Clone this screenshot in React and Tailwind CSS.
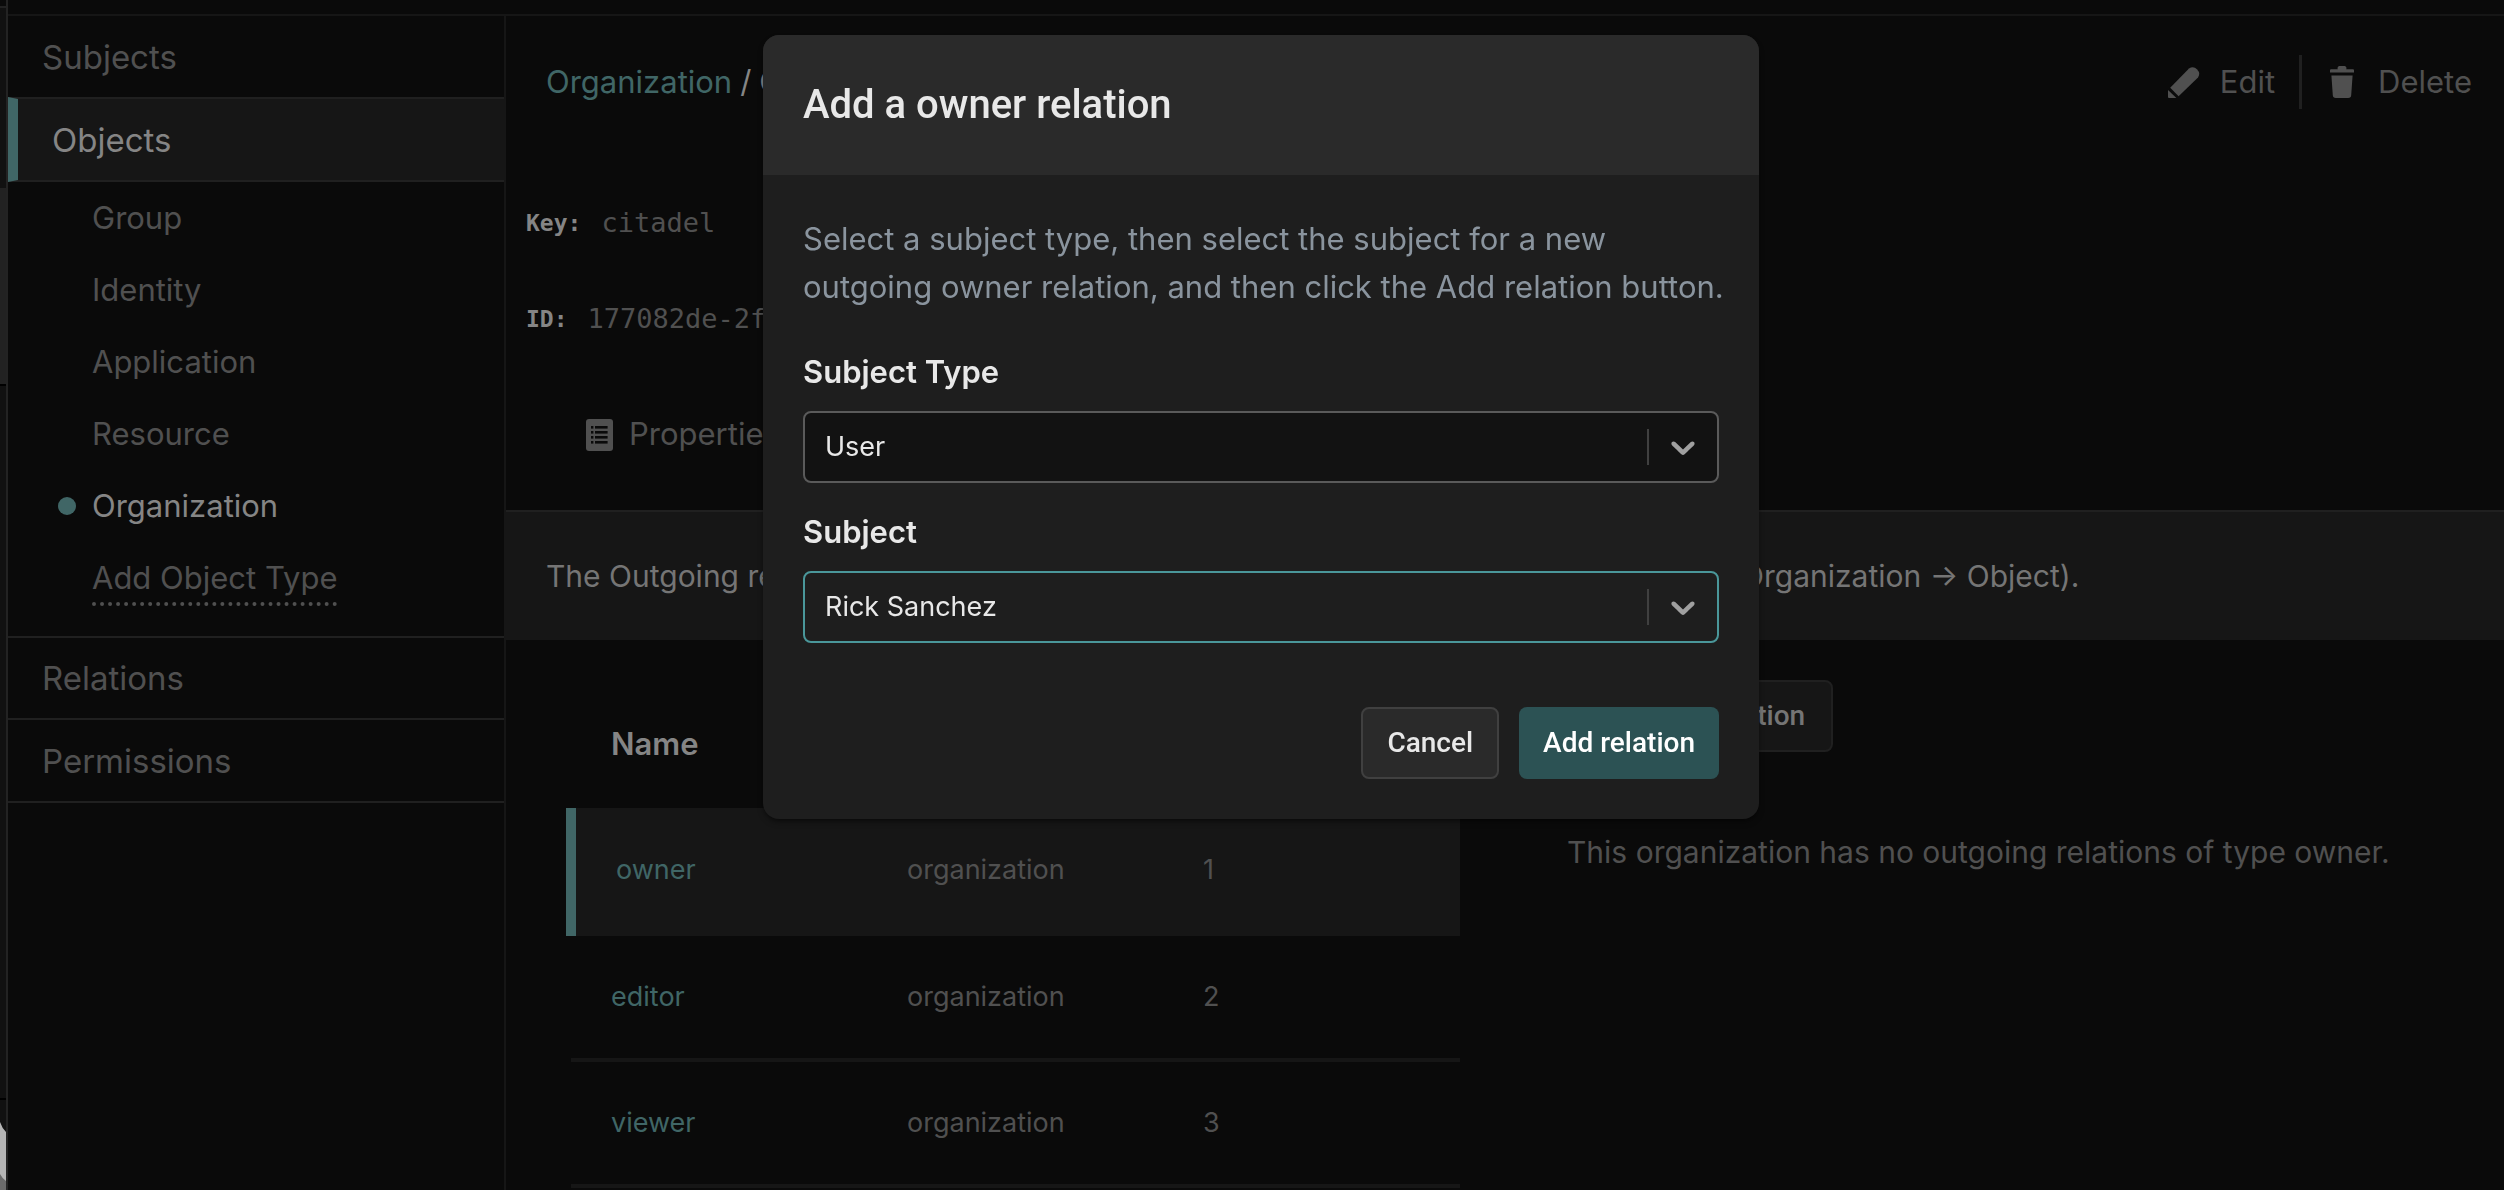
const OBJECT_TYPES = ["Group", "Identity", "Application", "Resource", "Organization"];

const RELATIONS = [
  { name: "owner", type: "organization", count: 1, active: true },
  { name: "editor", type: "organization", count: 2 },
  { name: "viewer", type: "organization", count: 3 },
];

function PencilIcon() {
  return (
    <svg viewBox="0 0 32 32" className="size-8" fill="currentColor" aria-hidden="true">
      <path d="M2.2 21.8 21 2.4a6.6 6.6 0 0 1 9 9.2L10.6 30.2Z" />
      <path d="M0 24 8.4 32H1a1 1 0 0 1-1-1Z" />
    </svg>
  );
}

function TrashIcon() {
  return (
    <svg viewBox="0 0 24 32" className="h-8 w-6" fill="currentColor" aria-hidden="true">
      <path d="M10 0h4a2.2 2.2 0 0 1 2.2 3.2H23a1 1 0 0 1 1 1v2.2H0V4.2a1 1 0 0 1 1-1h6.8A2.2 2.2 0 0 1 10 0Z" />
      <path d="M1.4 9.5h21.2l-1.4 19.7a3 3 0 0 1-3 2.8H5.8a3 3 0 0 1-3-2.8Z" />
    </svg>
  );
}

function ListIcon() {
  return (
    <svg viewBox="0 0 27 32" className="h-8 w-[27px]" aria-hidden="true">
      <rect width="27" height="32" rx="3" fill="#505050" />
      <g fill="#0a0a0a">
        {[7, 12, 17, 22].map((y) => (
          <g key={y}>
            <rect x="5" y={y} width="2.4" height="2.6" />
            <rect x="9" y={y} width="12.6" height="2.6" />
          </g>
        ))}
      </g>
    </svg>
  );
}

function ChevronIcon() {
  return (
    <svg viewBox="0 0 20 20" className="size-10" fill="#a0a0a0" aria-hidden="true">
      <path d="M4.516 7.548c0.436-0.446 1.043-0.481 1.576 0l3.908 3.747 3.908-3.747c0.533-0.481 1.141-0.446 1.574 0 0.436 0.445 0.408 1.197 0 1.615-0.406 0.418-4.695 4.502-4.695 4.502-0.217 0.223-0.502 0.335-0.787 0.335s-0.57-0.112-0.789-0.335c0 0-4.287-4.084-4.695-4.502s-0.436-1.17 0-1.615z" />
    </svg>
  );
}

function EdgeStrip() {
  return (
    <div className="flex w-2 shrink-0 flex-col border-r-2 border-[#232323] bg-[#111111]">
      <div className="h-[6px] bg-[#0a0a0a]" />
      <div className="h-[2px] bg-[#222222]" />
      <div className="h-[180px]" />
      <div className="h-[196px] bg-[#222222]" />
      <div className="h-[2px] bg-black" />
      <div className="h-[712px]" />
      <div className="h-[2px] bg-black" />
      <svg viewBox="0 0 6 90" className="h-[90px] w-[6px]" preserveAspectRatio="none" aria-hidden="true">
        <path d="M0 70 6 80V90H0Z" fill="#6a6a6a" />
        <path d="M0 22Q2 28 6 32V81Q2 78 0 74Z" fill="#b4b4b4" />
      </svg>
    </div>
  );
}

function Sidebar() {
  return (
    <nav className="w-[498px] shrink-0 border-r-2 border-[#161616] text-[33px] leading-10 text-[#505050]">
      <a href="#subjects" className="flex h-[81px] items-center pl-[34px]">
        Subjects
      </a>
      <a
        href="#objects"
        className="flex h-[85px] items-center border-y-2 border-l-[10px] border-y-[#202020] border-l-[#406666] bg-[#161616] pl-[34px] text-[#858585]"
      >
        Objects
      </a>
      <ul className="border-b-2 border-[#202020] pb-[22px] text-[31px]">
        {OBJECT_TYPES.map((type) => (
          <li key={type}>
            {type === "Organization" ? (
              <a href="#organization" className="flex h-[72px] items-center gap-4 pl-[50px] text-[#858585]">
                <span className="size-[18px] rounded-full bg-[#406666]" />
                {type}
              </a>
            ) : (
              <a href="#type" className="flex h-[72px] items-center pl-[84px]">
                {type}
              </a>
            )}
          </li>
        ))}
        <li className="flex h-[72px] items-center pl-[84px]">
          <a href="#add" className="mt-2 h-12 border-b-4 border-dotted border-[#505050]">
            Add Object Type
          </a>
        </li>
      </ul>
      <a href="#relations" className="flex h-[82px] items-center border-b-2 border-[#202020] pl-[34px]">
        Relations
      </a>
      <a href="#permissions" className="flex h-[83px] items-center border-b-2 border-[#202020] pl-[34px]">
        Permissions
      </a>
    </nav>
  );
}

function RelationsTable() {
  return (
    <table className="w-[894px] table-fixed border-collapse text-left text-[27px]">
      <thead>
        <tr className="h-[128px] text-[31px] text-[#858585]">
          <th className="w-[296px] pl-10 font-semibold">Name</th>
          <th className="w-[296px]" />
          <th />
        </tr>
      </thead>
      <tbody>
        {RELATIONS.map((r) => (
          <tr
            key={r.name}
            className={
              r.active
                ? "h-[126px] border-b-4 border-[#161616] bg-[#161616]"
                : "h-[126px] border-b-4 border-[#161616]"
            }
          >
            <td className={r.active ? "border-l-[10px] border-l-[#406666] pl-10" : "pl-10"}>
              <a href="#relation" className="text-[#406666]">
                {r.name}
              </a>
            </td>
            <td className="pl-10 text-[#505050]">{r.type}</td>
            <td className="pl-10 text-[#505050]">{r.count}</td>
          </tr>
        ))}
      </tbody>
    </table>
  );
}

function Main() {
  return (
    <main className="min-w-0 flex-1">
      <header className="flex h-[132px] items-center justify-between pr-8 pl-10 text-[31px]">
        <h1 className="flex gap-2 whitespace-nowrap text-[#858585]">
          <a href="#organization" className="text-[#406666]">
            Organization
          </a>
          <span>/</span>
          <span>Citadel of Ricks</span>
        </h1>
        <div className="flex items-center text-[#505050]">
          <button type="button" className="flex items-center gap-5">
            <PencilIcon />
            Edit
          </button>
          <span className="mr-7 ml-6 h-[54px] w-[3px] bg-[#202020]" />
          <button type="button" className="flex items-center gap-6">
            <TrashIcon />
            Delete
          </button>
        </div>
      </header>

      <dl className="flex flex-col gap-12 pt-[51px] pl-5 font-['DejaVu_Sans_Mono',monospace] text-[27px] leading-[48px]">
        <div className="flex items-center gap-5">
          <dt className="text-[23px] font-bold text-[#858585]">Key:</dt>
          <dd className="text-[#505050]">citadel</dd>
        </div>
        <div className="flex items-center gap-5">
          <dt className="text-[23px] font-bold text-[#858585]">ID:</dt>
          <dd className="text-[#505050]">177082de-2fbe-11ee</dd>
        </div>
      </dl>

      <div className="mt-4 flex h-[151px] items-center pl-20 text-[31px] text-[#505050]">
        <button type="button" className="flex items-center gap-4">
          <ListIcon />
          Properties
        </button>
      </div>

      <p className="flex h-[130px] items-center border-t-2 border-[#202020] bg-[#161616] pl-10 text-[30px] whitespace-nowrap text-[#757575]">
        The Outgoing relations tab lists all relations in which this organization is the subject (Organization → Object).
      </p>

      <div className="flex gap-[107px] pt-10 pl-[60px]">
        <RelationsTable />
        <section>
          <button
            type="button"
            className="h-[72px] rounded-lg border-2 border-[#202020] bg-[#161616] px-[26px] font-['Roboto',sans-serif] text-[28px] font-medium text-[#757575]"
          >
            Add new relation
          </button>
          <p className="pt-19 text-[30px] leading-[48px] whitespace-nowrap text-[#505050]">
            This organization has no outgoing relations of type owner.
          </p>
        </section>
      </div>
    </main>
  );
}

function SelectField({ id, label, options, focused }) {
  return (
    <div className="flex flex-col gap-[15px]">
      <label htmlFor={id} className="text-[31px] leading-[48px] font-semibold">
        {label}
      </label>
      <div className="relative">
        <select
          id={id}
          className={
            focused
              ? "h-[72px] w-full appearance-none rounded-lg border-2 border-[#4a979a] bg-[#1e1e1e] px-5 text-[27px] outline-none"
              : "h-[72px] w-full appearance-none rounded-lg border-2 border-[#5a5a5a] bg-[#121212] px-5 text-[27px] outline-none"
          }
        >
          {options.map((o) => (
            <option key={o}>{o}</option>
          ))}
        </select>
        <div className="pointer-events-none absolute inset-y-0 right-4 flex items-center gap-[14px]">
          <span className="h-9 w-[2px] bg-[#404040]" />
          <ChevronIcon />
        </div>
      </div>
    </div>
  );
}

function RelationDialog() {
  return (
    <div className="fixed inset-0 flex items-start justify-center pt-[35px] pl-[18px]">
      <div
        role="dialog"
        aria-modal="true"
        aria-labelledby="dialog-title"
        className="w-[996px] overflow-hidden rounded-2xl bg-[#1e1e1e] text-[#e8e8e8] shadow-md shadow-black/40"
      >
        <div className="flex h-[140px] items-center bg-[#2a2a2a] px-10">
          <h2 id="dialog-title" className="font-['Roboto',sans-serif] text-[40px] font-medium">
            Add a owner relation
          </h2>
        </div>
        <form className="p-10">
          <p className="text-[31px] leading-[48px] whitespace-nowrap text-[#8a949e]">
            Select a subject type, then select the subject for a new
            <br />
            outgoing owner relation, and then click the Add relation button.
          </p>
          <div className="mt-[37px] flex flex-col gap-[25px]">
            <SelectField id="subject-type" label="Subject Type" options={["User", "Group"]} />
            <SelectField id="subject" label="Subject" options={["Rick Sanchez", "Morty Smith"]} focused />
          </div>
          <div className="mt-16 flex justify-end gap-5 font-['Roboto',sans-serif] text-[28px] font-medium">
            <button type="button" className="h-[72px] rounded-lg border-2 border-[#404040] bg-[#2a2a2a] px-6">
              Cancel
            </button>
            <button type="submit" className="h-[72px] rounded-lg bg-[#2c5254] px-6 text-white">
              Add relation
            </button>
          </div>
        </form>
      </div>
    </div>
  );
}

export default function App() {
  return (
    <div className="flex h-screen overflow-hidden bg-[#0a0a0a] font-['Inter',sans-serif]">
      <EdgeStrip />
      <div className="flex min-w-0 flex-1 flex-col">
        <div className="h-4 shrink-0 border-b-2 border-[#161616]" />
        <div className="flex min-h-0 flex-1">
          <Sidebar />
          <Main />
        </div>
      </div>
      <RelationDialog />
    </div>
  );
}
